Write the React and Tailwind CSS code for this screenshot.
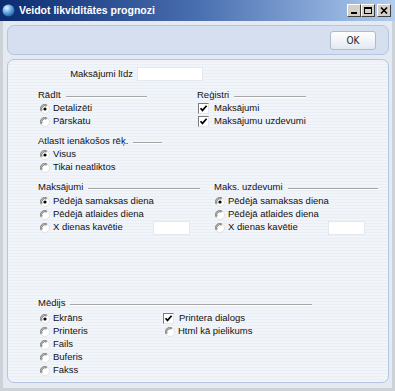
import React from 'react';

function Radio({ checked }) {
  return (
    <svg width="10" height="10" viewBox="0 0 10 10" className="shrink-0">
      <circle cx="5" cy="5" r="4.5" fill="#ffffff" stroke="#e2e2e2" />
      <path d="M1.2 7.2 A4.3 4.3 0 0 1 7.2 1.2" fill="none" stroke="#7c7c7c" strokeWidth="1" />
      <path d="M2 6.4 A3.3 3.3 0 0 1 6.4 2" fill="none" stroke="#3f3f3f" strokeWidth="0.8" />
      {checked && <circle cx="5" cy="5" r="1.6" fill="#000000" />}
    </svg>
  );
}

function Check({ checked }) {
  return (
    <div className="w-[11px] h-[11px] shrink-0 bg-white border-t border-l border-[#7c7c7c] border-b border-r border-b-[#e6e6e6] border-r-[#e6e6e6] flex items-center justify-center">
      {checked && (
        <svg width="9" height="9" viewBox="0 0 9 9">
          <path d="M1.5 4.2 L3.5 6.4 L7.6 1.8" fill="none" stroke="#000" strokeWidth="1.7" />
        </svg>
      )}
    </div>
  );
}

function Header({ label, className }) {
  return (
    <div className={`flex items-center h-[13px] ${className}`}>
      <span className="whitespace-nowrap">{label}</span>
      <span className="ml-[5px] flex-1 mt-[3px] border-t border-[#a6a6a6] border-b border-b-white" />
    </div>
  );
}

function RadioRow({ label, checked, box }) {
  return (
    <div className="flex items-center h-[13px] pl-[2px]">
      <Radio checked={checked} />
      {box ? (
        <>
          <span className="ml-[3px] w-[100px] whitespace-nowrap">{label}</span>
          <div className="w-[37px] h-[14px] bg-white border border-[#e4e8ef]" />
        </>
      ) : (
        <span className="ml-[3px] whitespace-nowrap">{label}</span>
      )}
    </div>
  );
}

function CheckRow({ label, checked }) {
  return (
    <div className="flex items-center h-[13px]">
      <Check checked={checked} />
      <span className="ml-[5px] whitespace-nowrap">{label}</span>
    </div>
  );
}

export default function App() {
  return (
    <div className="w-[395px] h-[391px] flex flex-col font-['Liberation_Sans',Arial,sans-serif] text-[9.5px] text-[#111] overflow-hidden">
      {/* title bar */}
      <div className="h-[21px] shrink-0 flex items-center bg-gradient-to-r from-[#0c2b70] via-[#4a6fb0] to-[#b1cdef] pl-[2px] pr-[4px]">
        <svg width="13" height="13" viewBox="0 0 13 13">
          <defs>
            <radialGradient id="g" cx="0.35" cy="0.3" r="0.8">
              <stop offset="0" stopColor="#e8f6ff" />
              <stop offset="0.5" stopColor="#5fa8e0" />
              <stop offset="1" stopColor="#1c4f9a" />
            </radialGradient>
          </defs>
          <circle cx="6.5" cy="6.5" r="6" fill="url(#g)" />
        </svg>
        <span className="ml-[4px] text-white font-bold text-[10.5px]">Veidot likviditātes prognozi</span>
        <div className="ml-auto flex items-center">
          <div className="w-[14px] h-[13px] bg-[#d4d0c8] border border-t-white border-l-white border-b-[#404040] border-r-[#404040] flex items-end justify-center pb-[2px]">
            <span className="w-[6px] h-[2px] bg-black" />
          </div>
          <div className="w-[14px] h-[13px] bg-[#d4d0c8] border border-t-white border-l-white border-b-[#404040] border-r-[#404040] flex items-center justify-center">
            <span className="w-[8px] h-[7px] border border-black border-t-2" />
          </div>
          <div className="ml-[2px] w-[14px] h-[13px] bg-[#d4d0c8] border border-t-white border-l-white border-b-[#404040] border-r-[#404040] flex items-center justify-center">
            <svg width="8" height="7" viewBox="0 0 8 7">
              <path d="M1 0.5 L7 6.5 M7 0.5 L1 6.5" stroke="#000" strokeWidth="1.6" />
            </svg>
          </div>
        </div>
      </div>

      {/* window body */}
      <div className="flex-1 flex flex-col bg-[#e4e9f2] border-l-[3px] border-r-[3px] border-b-[3px] border-[#cdd1d8] pl-[4px] pr-[3px] pt-[4px] pb-[5px] gap-[4px]">
        {/* toolbar */}
        <div className="h-[30px] shrink-0 rounded-[7px] border border-[#b5c6e2] bg-[#d6dff0] flex items-center justify-end pr-[12px]">
          <button className="w-[46px] h-[19px] rounded-[3px] border border-[#aebcd2] bg-gradient-to-b from-white to-[#e3e9f2] text-[10px] font-['DejaVu_Sans_Condensed','DejaVu_Sans',sans-serif] text-[#222]">
            OK
          </button>
        </div>

        {/* main panel */}
        <div className="flex-1 rounded-[7px] border border-[#b3c5e2] bg-[repeating-linear-gradient(0deg,#f1f4f9_0px,#f1f4f9_2px,#eaeff6_2px,#eaeff6_3px)] flex flex-col">
          <div className="flex items-center h-[14px] mt-[7px] pl-[61px]">
            <span className="w-[64px] text-right whitespace-nowrap">Maksājumi līdz</span>
            <div className="ml-[4px] w-[66px] h-[14px] bg-white border border-[#e4e8ef]" />
          </div>

          <div className="flex mt-[8px] pl-[30px]">
            <div className="w-[159px] flex flex-col">
              <Header label="Rādīt" className="w-[109px]" />
              <RadioRow label="Detalizēti" checked />
              <RadioRow label="Pārskatu" />
            </div>
            <div className="flex flex-col">
              <Header label="Reģistri" className="w-[109px]" />
              <div className="pl-[1px]">
                <CheckRow label="Maksājumi" checked />
                <CheckRow label="Maksājumu uzdevumi" checked />
              </div>
            </div>
          </div>

          <div className="flex flex-col mt-[7px] pl-[30px]">
            <Header label="Atlasīt ienākošos rēķ." className="w-[124px]" />
            <RadioRow label="Visus" checked />
            <RadioRow label="Tikai neatliktos" />
          </div>

          <div className="flex mt-[7px] pl-[30px]">
            <div className="w-[176px] flex flex-col">
              <Header label="Maksājumi" className="w-[162px]" />
              <div className="mt-[1px]">
                <RadioRow label="Pēdējā samaksas diena" checked />
                <RadioRow label="Pēdējā atlaides diena" />
                <RadioRow label="X dienas kavētie" box />
              </div>
            </div>
            <div className="flex flex-col">
              <Header label="Maks. uzdevumi" className="w-[164px]" />
              <div className="mt-[1px] -ml-[1px]">
                <RadioRow label="Pēdējā samaksas diena" checked />
                <RadioRow label="Pēdējā atlaides diena" />
                <RadioRow label="X dienas kavētie" box />
              </div>
            </div>
          </div>

          <div className="flex flex-col mt-[63px] pl-[30px]">
            <Header label="Mēdijs" className="w-[274px]" />
            <div className="flex mt-[2px]">
              <div className="w-[125px]">
                <RadioRow label="Ekrāns" checked />
                <RadioRow label="Printeris" />
                <RadioRow label="Fails" />
                <RadioRow label="Buferis" />
                <RadioRow label="Fakss" />
              </div>
              <div>
                <CheckRow label="Printera dialogs" checked />
                <RadioRow label="Html kā pielikums" />
              </div>
            </div>
          </div>
        </div>
      </div>
    </div>
  );
}
